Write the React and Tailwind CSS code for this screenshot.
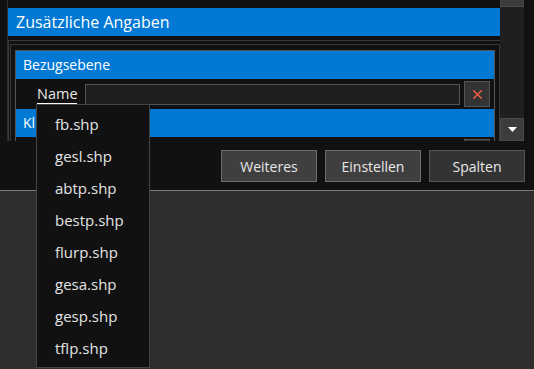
import { X } from 'lucide-react';

const files = ['fb.shp', 'gesl.shp', 'abtp.shp', 'bestp.shp', 'flurp.shp', 'gesa.shp', 'gesp.shp', 'tflp.shp'];

function Btn({ label, active }) {
  return (
    <button
      className={`w-[96px] h-[32px] border text-[14px] text-[#e8e8e8] ${
        active ? 'bg-[#3f3f3f] border-[#6c6c6c]' : 'bg-[#333333] border-[#555555]'
      }`}
    >
      {label}
    </button>
  );
}

export default function App() {
  return (
    <div
      className="relative w-[534px] h-[369px] overflow-hidden bg-[#2e2e2e]"
      style={{ fontFamily: '"Open Sans", "Noto Sans", sans-serif' }}
    >
      <div className="h-[191px] bg-[#111111] border-b border-[#7c7c7c] flex flex-col">
        <div className="flex h-[141px]">
          <div className="ml-[7px] w-[493px] border-l border-[#2e2e2e] overflow-hidden">
            <div className="mt-[8px] h-[28px] bg-[#0078d4] text-white text-[16px] leading-[28px] pl-[8px]">
              Zusätzliche Angaben
            </div>
            <div className="mt-[4px] border-t border-l border-[#3a3a3a] h-[101px] pt-[3px] pl-[1px]">
              <div className="border-t border-l border-r border-[#383838] h-[97px] pl-[4px] pr-[4px] pt-[5px]">
                <div className="border-l border-t border-r border-[#555555] h-[91px] overflow-hidden">
                  <div className="h-[28px] bg-[#0078d4] text-white text-[14px] leading-[28px] pl-[7px]">
                    Bezugsebene
                  </div>
                  <div className="h-[30px] flex items-center">
                    <span className="ml-[21px] w-[40px] whitespace-nowrap text-[14.5px] leading-[19px] text-[#e8e8e8] border-b border-white">
                      Name
                    </span>
                    <div className="ml-[8px] w-[375px] h-[21px] bg-[#1f1f1f] border border-[#555555]" />
                    <button className="ml-[4px] w-[26px] h-[26px] bg-[#333333] border border-[#555555] flex items-center justify-center">
                      <X size={15} strokeWidth={2.5} color="#ef5a45" />
                    </button>
                  </div>
                  <div className="h-[28px] bg-[#0078d4] text-white text-[14px] leading-[28px] pl-[7px]">
                    Kl
                  </div>
                  <div className="h-[30px] flex items-start pt-[2px]">
                    <div className="ml-[448px] w-[26px] h-[26px] bg-[#333333] border border-[#555555]" />
                  </div>
                </div>
              </div>
            </div>
          </div>
          <div className="w-[24px] flex flex-col">
            <div className="h-[7px] bg-[#3c3c3c] border border-t-0 border-[#4a4a4a]" />
            <div className="flex-1 bg-[#1f1f1f]" />
            <div className="h-[23px] bg-[#3c3c3c] border border-[#4a4a4a] flex items-center justify-center">
              <svg width="9" height="5" viewBox="0 0 9 5">
                <path d="M0 0h9L4.5 5z" fill="#ffffff" />
              </svg>
            </div>
          </div>
        </div>
        <div className="flex justify-end gap-[8px] pr-[9px] pt-[9px]">
          <Btn label="Weiteres" active />
          <Btn label="Einstellen" active />
          <Btn label="Spalten" />
        </div>
      </div>

      <div className="absolute left-[36px] top-[104px] w-[114px] h-[264px] bg-[#111111] border border-[#444444] pt-[3px]">
        {files.map(f => (
          <div key={f} className="h-[32px] pl-[18px] flex items-center text-[15px] text-[#e4e4e4]">
            {f}
          </div>
        ))}
      </div>
    </div>
  );
}
